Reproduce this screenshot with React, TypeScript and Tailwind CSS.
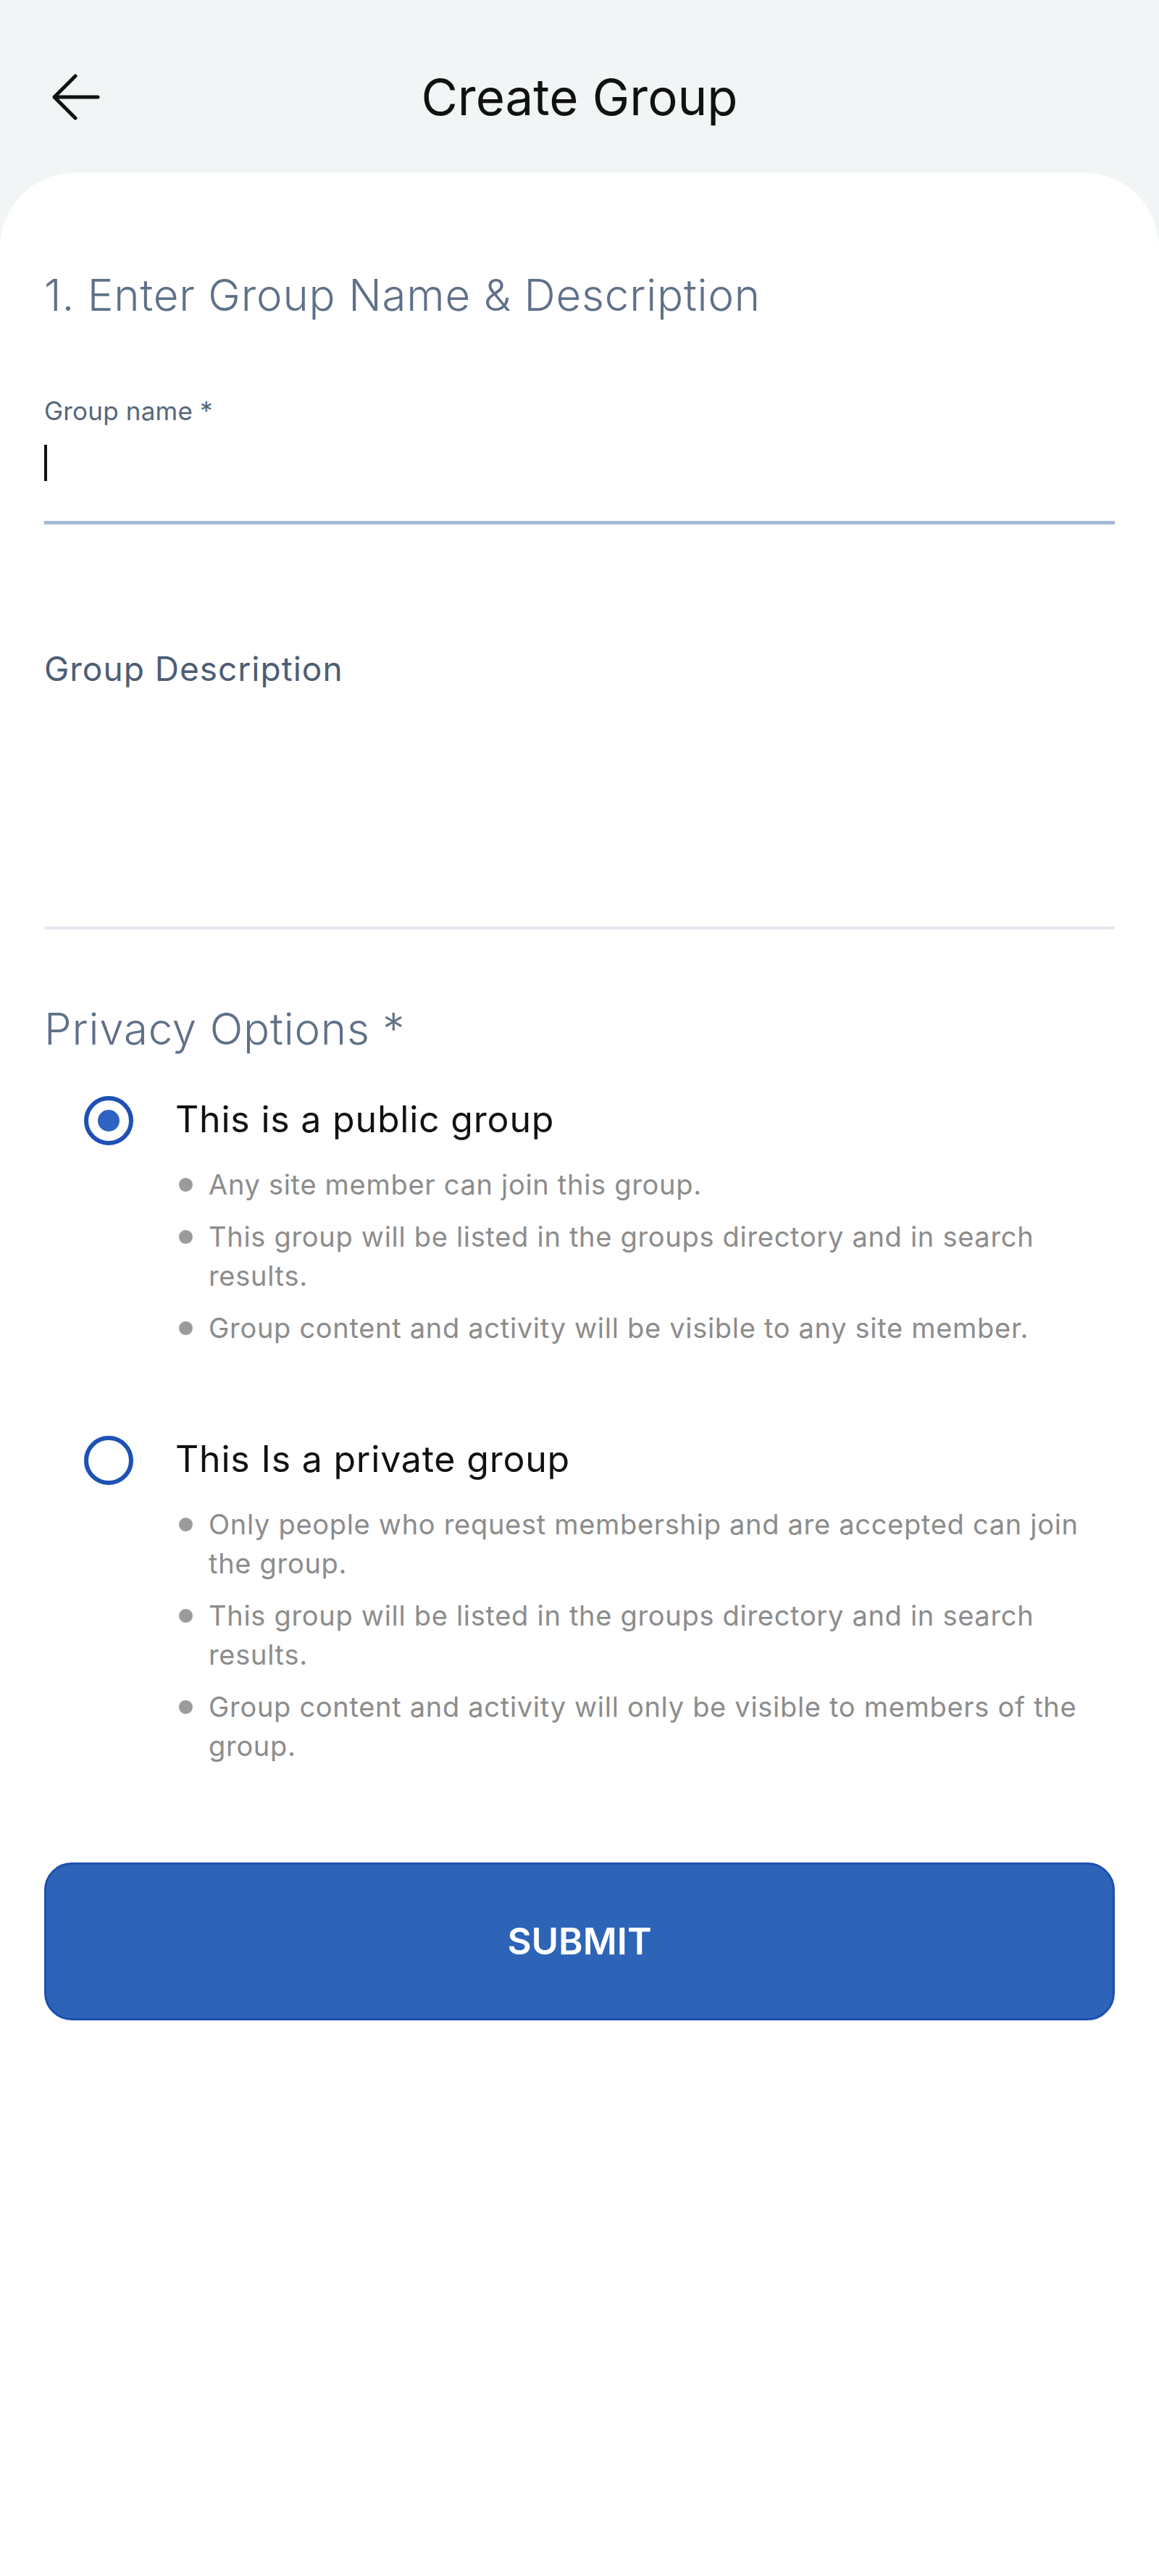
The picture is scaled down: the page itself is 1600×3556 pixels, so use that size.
const publicPoints = [
  'Any site member can join this group.',
  'This group will be listed in the groups directory and in search results.',
  'Group content and activity will be visible to any site member.',
]

const privatePoints = [
  'Only people who request membership and are accepted can join the group.',
  'This group will be listed in the groups directory and in search results.',
  'Group content and activity will only be visible to members of the group.',
]

interface OptionProps {
  title: string
  points: string[]
  checked: boolean
}

const PrivacyOption: React.FC<OptionProps> = ({ title, points, checked }) => {
  return (
    <div className="flex flex-row pl-[55px]">
      <div className="w-[68px] h-[68px] mt-[-4px] shrink-0 rounded-full border-[6px] border-[#1f51b5] flex items-center justify-center">
        {checked && <div className="w-[30px] h-[30px] rounded-full bg-[#2e63c2]" />}
      </div>
      <div className="ml-[58px] flex-1">
        <div className="text-[50px] leading-[56px] text-[#111111] tracking-[0.8px]">{title}</div>
        <ul className="mt-[35px] flex flex-col gap-[18px]">
          {points.map((p, i) => (
            <li key={i} className="flex flex-row text-[38px] leading-[54px] text-[#8c8c8c] tracking-[0.7px]">
              <span className="w-[19px] h-[19px] rounded-full bg-[#9b9b9b] mt-[18px] ml-[5px] mr-[22px] shrink-0" />
              <span>{p}</span>
            </li>
          ))}
        </ul>
      </div>
    </div>
  )
}

const App: React.FC = () => {
  return (
    <div className="w-full min-h-[3556px] bg-[#f1f5f6]" style={{ fontFamily: 'Inter, "Noto Sans", sans-serif' }}>
      <div className="h-[238px] pt-[98px]">
        <div className="h-[72px] grid grid-cols-[1fr_auto_1fr] items-center px-[72px]">
          <button className="w-[66px] h-[64px]">
            <svg width="66" height="64" viewBox="0 0 66 64" fill="none" stroke="#111" strokeWidth="5" strokeLinecap="round" strokeLinejoin="round">
              <path d="M63 32H4" />
              <path d="M32 3L3 32L32 61" />
            </svg>
          </button>
          <div className="text-[69px] leading-[72px] text-[#111111]">Create Group</div>
          <div />
        </div>
      </div>

      <div className="bg-white rounded-t-[104px] min-h-[3318px] px-[61px] pt-[134px]">
        <div className="text-[60px] leading-[70px] font-light text-[#5f7188] tracking-[0.8px]">1. Enter Group Name &amp; Description</div>

        <div className="mt-[105px] text-[35px] leading-[40px] text-[#56677c] tracking-[0.2px]">Group name *</div>
        <div className="h-[137px] border-b-[5px] border-[#a5bad6] pt-[27px]">
          <div className="w-[4px] h-[50px] bg-[#111]" />
        </div>

        <div className="mt-[172px] text-[46px] leading-[54px] text-[#4d5e74] tracking-[1px]">Group Description</div>
        <div className="h-[333px] border-b-[4px] border-[#e3e9f0]" />

        <div className="mt-[102px] text-[60px] leading-[70px] font-light text-[#5f7188] tracking-[0.8px]">Privacy Options *</div>

        <div className="mt-[62px]">
          <PrivacyOption title="This is a public group" points={publicPoints} checked={true} />
        </div>
        <div className="mt-[126px]">
          <PrivacyOption title="This Is a private group" points={privatePoints} checked={false} />
        </div>

        <button className="mt-[134px] w-full h-[218px] rounded-[38px] bg-[#2d64b8] border-[3px] border-[#1d50b0] text-white text-[51px] font-semibold">
          SUBMIT
        </button>
      </div>
    </div>
  )
}

export default App
